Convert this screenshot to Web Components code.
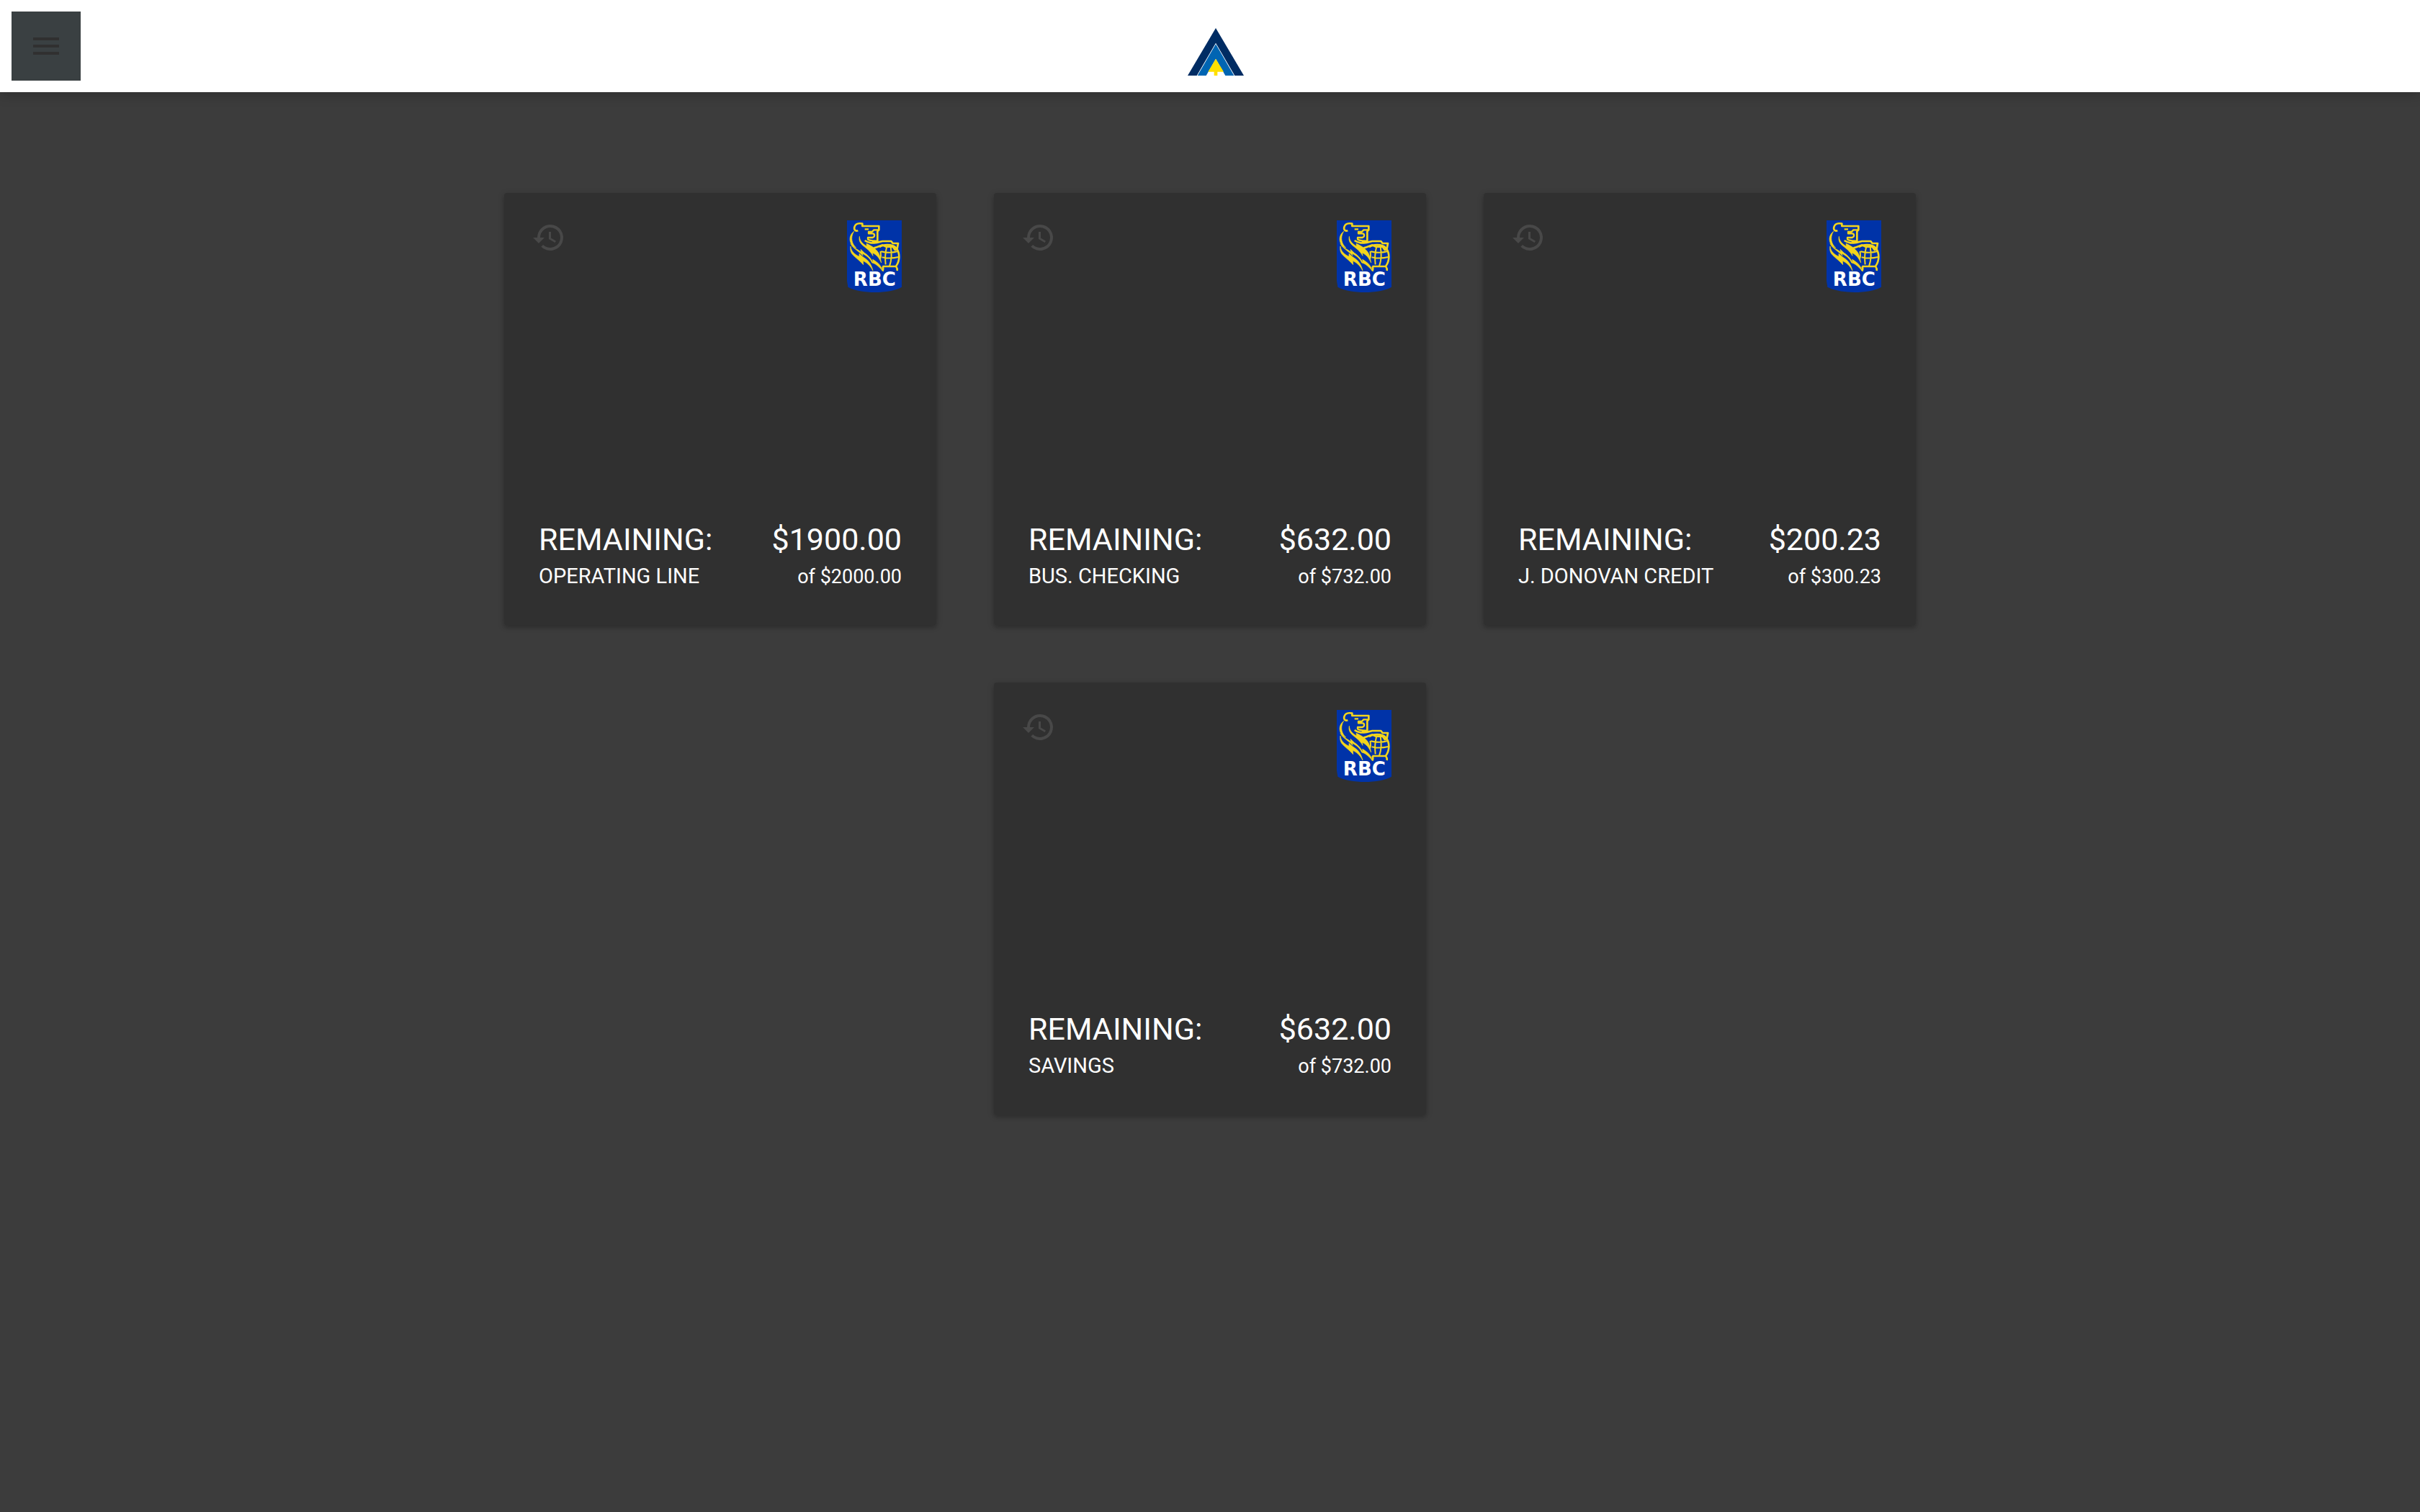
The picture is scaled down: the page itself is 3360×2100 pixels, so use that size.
<!DOCTYPE html>
<html lang="en">
<head>
<meta charset="utf-8">
<title>Accounts</title>
<style>
  body { margin: 0; min-height: 100vh; background: #3c3c3c; font-family: Roboto, sans-serif; color: #fff; }
</style>
</head>
<body>
<account-dashboard></account-dashboard>

<template id="dashboard-template">
  <style>
    :host { display: block; }
    main { display: flex; flex-wrap: wrap; justify-content: center; gap: 80px; max-width: 2040px; margin: 0 auto; padding: 140px 40px; }
  </style>
  <app-toolbar></app-toolbar>
  <main>
    <account-card>
      <span slot="remaining">$1900.00</span><span slot="name">OPERATING LINE</span><span slot="total">of $2000.00</span>
    </account-card>
    <account-card>
      <span slot="remaining">$632.00</span><span slot="name">BUS. CHECKING</span><span slot="total">of $732.00</span>
    </account-card>
    <account-card>
      <span slot="remaining">$200.23</span><span slot="name">J. DONOVAN CREDIT</span><span slot="total">of $300.23</span>
    </account-card>
    <account-card>
      <span slot="remaining">$632.00</span><span slot="name">SAVINGS</span><span slot="total">of $732.00</span>
    </account-card>
  </main>
</template>

<template id="toolbar-template">
  <style>
    :host { display: block; }
    header { display: grid; align-items: center; padding: 16px 0 16px 16px; background: #fff; box-shadow: 0 4px 16px rgba(0,0,0,.2); }
    header > * { grid-area: 1 / 1; }
    button { width: 96px; height: 96px; padding: 0; border: 0; background: #3a4042; color: #303030; display: grid; place-items: center; }
    button svg { width: 48px; height: 48px; fill: currentColor; }
    brand-mark { justify-self: center; }
  </style>
  <header>
    <brand-mark></brand-mark>
    <button type="button" aria-label="Menu">
      <svg viewBox="0 0 24 24" aria-hidden="true"><path d="M3 18h18v-2H3v2zm0-5h18v-2H3v2zm0-7v2h18V6H3z"/></svg>
    </button>
  </header>
</template>

<template id="brand-template">
  <style>
    :host { display: block; padding-top: 16px; }
    svg { display: block; width: 78px; height: 66px; }
  </style>
  <svg viewBox="0 0 234 198" aria-hidden="true">
    <path fill="#002c63" d="M117 0L234 198H196L117 62L38 198H0z"/>
    <path fill="#0065b3" d="M117 67L193 198H157L117 128L77 198H41z"/>
    <path fill="#ffe000" d="M117 128L150 182H124V198H110V182H85z"/>
  </svg>
</template>

<template id="card-template">
  <style>
    :host { display: flex; flex-direction: column; justify-content: space-between; box-sizing: border-box; width: 600px; aspect-ratio: 1; padding: 38px 48px 45px; border-radius: 4px; background: #303030; box-shadow: 0 2px 10px rgba(0,0,0,.2), 0 4px 4px rgba(0,0,0,.1); }
    .top { display: flex; justify-content: space-between; align-items: flex-start; margin-left: -10px; }
    button { display: block; width: 48px; height: 48px; padding: 0; border: 0; background: none; color: #484848; }
    button svg { display: block; fill: currentColor; }
    .row { display: flex; justify-content: space-between; align-items: baseline; }
    .main { font-size: 43px; line-height: 58px; }
    .sub { font-size: 29px; line-height: 44px; }
    .total { font-size: 27px; }
  </style>
  <div class="top">
    <button type="button" aria-label="History">
      <svg viewBox="0 0 24 24" aria-hidden="true"><path d="M13 3a9 9 0 0 0-9 9H1l3.89 3.89.07.14L9 12H6a7 7 0 1 1 2.06 4.94l-1.42 1.42A9 9 0 1 0 13 3zm-1 5v5l4.28 2.54.72-1.21-3.5-2.08V8H12z"/></svg>
    </button>
    <bank-logo></bank-logo>
  </div>
  <div>
    <div class="row main"><span>REMAINING:</span><slot name="remaining"></slot></div>
    <div class="row sub"><slot name="name"></slot><span class="total"><slot name="total"></slot></span></div>
  </div>
</template>

<template id="bank-template">
  <style>
    :host { display: block; }
    svg { display: block; width: 76px; height: 100px; }
  </style>
  <svg viewBox="48 48 228 300" role="img" aria-label="RBC">
    <path fill="#0033a8" d="M48 48H276V326C225 355 105 355 52 326L48 300z"/>
    <g fill="none" stroke="#f4d51c" stroke-width="7" stroke-linejoin="round">
      <path stroke-width="8" d="M94 91C84 94 76 88 79 76C83 62 93 58 112 62V72H181V88L175 94V137H152"/>
      <path d="M122 85H138M181 88H160L152 96H138V103H157C165 107 164 118 154 120H135V127C142 133 156 133 172 134"/>
      <path stroke-width="8" d="M122 132C143 146 156 143 176 140L196 135H232L239 144H261L257 166L248 171L239 158H210L196 151C184 154 176 160 160 163"/>
      <path stroke-width="8" d="M183 160C196 148 237 145 253 164C270 186 268 216 253 238M196 240H252C257 246 258 251 257 258M196 240C200 247 199 254 196 260"/>
      <path stroke-width="6" d="M187 177C190 193 190 202 186 208M213 161C207 183 206 207 209 232M230 160C235 185 235 210 225 239M190 178C212 184 236 184 260 177M194 202C216 207 238 207 262 201"/>
    </g>
    <g fill="#f4d51c" stroke="#f4d51c" stroke-width="2">
      <path d="M77 94C60 107 57 126 63 141C71 158 89 169 107 179L105 169L121 184C140 196 153 214 157 227L155 211C177 223 190 237 196 258C177 236 163 227 152 225C145 206 128 195 112 186L114 196C99 177 72 166 63 145C66 150 80 160 86 162C70 148 60 122 77 94z"/>
      <path d="M63 156C66 180 81 190 99 199L99 187L112 199C130 210 148 223 156 258C143 233 130 225 115 217L116 233C102 216 80 202 68 187C61 176 61 164 63 156z"/>
      <path d="M100 115C101 136 116 147 130 156L129 145C154 155 174 172 181 187C187 202 189 214 191 225C181 205 173 192 154 184L156 196C145 176 128 164 115 154C103 144 96 132 100 115z"/>
    </g>
    <text x="163" y="322" text-anchor="middle" font-family="DejaVu Sans, sans-serif" font-weight="700" font-size="78" fill="#fff">RBC</text>
  </svg>
</template>

<script>
  const define = (name, templateId) => customElements.define(name, class extends HTMLElement {
    constructor() {
      super();
      this.attachShadow({ mode: 'open' }).append(document.getElementById(templateId).content.cloneNode(true));
    }
  });
  define('brand-mark', 'brand-template');
  define('bank-logo', 'bank-template');
  define('app-toolbar', 'toolbar-template');
  define('account-card', 'card-template');
  define('account-dashboard', 'dashboard-template');
</script>
</body>
</html>
